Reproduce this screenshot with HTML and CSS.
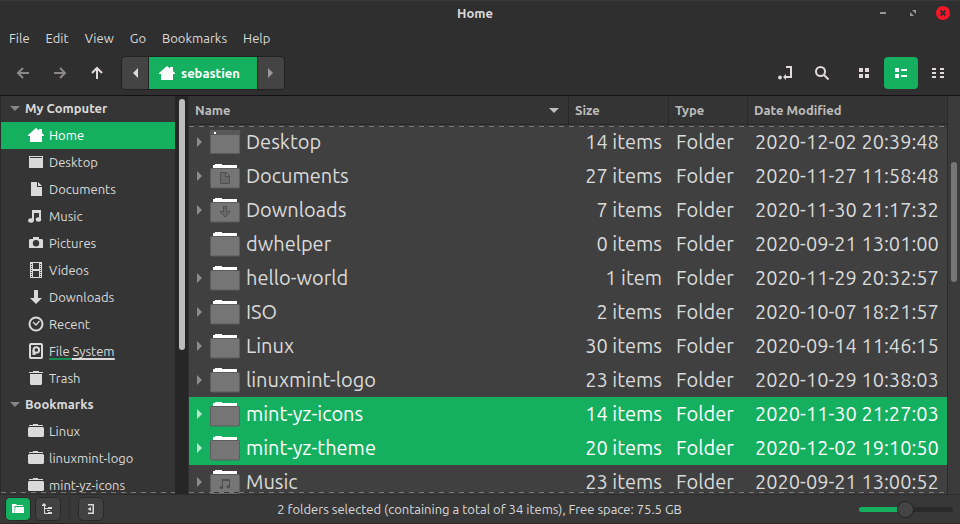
FILE: index.html
```html
<!DOCTYPE html>
<html lang="en">
<head>
<meta charset="utf-8">
<title>Home</title>
<link rel="stylesheet" href="styles.css">
</head>
<body>
<svg class="defs" aria-hidden="true">
  <symbol id="home" viewBox="0 0 16 16"><path d="M8 1 0 8v1h2v6h12V9h2V8l-2-1.800V2h-3v1.600z"/></symbol>
  <symbol id="bookmark-folder" viewBox="0 0 16 16"><path d="M1 3V2h4V1h5v1h5v1zM0 5l1-1h14l1 1v8l-1 1H1l-1-1z"/></symbol>
  <symbol id="caret-right" viewBox="0 0 5 10"><path d="M0 0v10l5-5z"/></symbol>
  <symbol id="caret-down" viewBox="0 0 10 5"><path d="M0 0h10L5 5z"/></symbol>
  <symbol id="folder" viewBox="0 0 30 26"><path fill="#fff" d="M3 5V2h2V1h7v1h15v3z"/><rect x="0.500" y="5.500" width="29" height="19.500" rx="1" fill="#757575" stroke="#5c5c5c"/></symbol>
  <symbol id="folder-desktop" viewBox="0 0 30 26"><rect x="0.500" y="1.500" width="29" height="23" fill="#757575" stroke="#5c5c5c"/><path fill="#585858" d="M0 1h30v5H0z"/><path fill="#fff" d="M4 3h2v2H4z"/></symbol>
</svg>

<header class="titlebar">
  <h1 class="title">Home</h1>
  <button class="window-button" aria-label="Minimize"><svg width="14" height="14" viewBox="0 0 14 14"><path fill="#979797" d="M4 6h6v2H4z"/></svg></button>
  <button class="window-button" aria-label="Maximize"><svg width="14" height="14" viewBox="0 0 14 14"><path fill="#979797" d="M6 4h4v4zM4 6v4h4z"/></svg></button>
  <button class="window-button" aria-label="Close"><svg width="14" height="14" viewBox="0 0 14 14"><circle cx="7" cy="7" r="7" fill="#ff1528"/><path stroke="#2f2f2f" stroke-width="2" d="m4.500 4.500 5 5m0-5-5 5"/></svg></button>
</header>

<nav class="menubar" aria-label="Menu">
  <button class="menu">File</button>
  <button class="menu">Edit</button>
  <button class="menu">View</button>
  <button class="menu">Go</button>
  <button class="menu">Bookmarks</button>
  <button class="menu">Help</button>
</nav>

<div class="toolbar">
  <button class="tool dim" aria-label="Back"><svg class="line" width="14" height="14" viewBox="0 0 14 14"><path d="M13 7H2m5-5L2 7l5 5"/></svg></button>
  <button class="tool dim" aria-label="Forward"><svg class="line" width="14" height="14" viewBox="0 0 14 14"><path d="M1 7h11M7 2l5 5-5 5"/></svg></button>
  <button class="tool" aria-label="Up"><svg class="line" width="14" height="14" viewBox="0 0 14 14"><path d="M7 13V2M2 7l5-5 5 5"/></svg></button>
  <div class="pathbar">
    <button class="path-step" aria-label="Scroll left"><svg width="5" height="10" viewBox="0 0 5 10"><path d="M5 0v10L0 5z"/></svg></button>
    <button class="path-current"><svg width="16" height="16"><use href="#home"/></svg>sebastien</button>
    <button class="path-step dim" aria-label="Scroll right"><svg width="5" height="10"><use href="#caret-right"/></svg></button>
  </div>
  <div class="tools-end">
    <button class="tool" aria-label="Toggle location entry"><svg width="16" height="16" viewBox="0 0 16 16"><circle cx="3" cy="12.500" r="1.900"/><path d="M9 1h6v12H9v2l-3-3 3-3v2h4V3H9z"/></svg></button>
    <button class="tool" aria-label="Search"><svg class="line" width="16" height="16" viewBox="0 0 16 16"><circle cx="6.500" cy="6.500" r="4.500"/><path d="m10 10 4.500 4.500"/></svg></button>
    <div class="views">
      <button class="tool" aria-label="Icon view"><svg width="16" height="16" viewBox="0 0 16 16"><path d="M3 3h4v4H3zM9 3h4v4H9zM3 9h4v4H3zM9 9h4v4H9z"/></svg></button>
      <button class="tool active" aria-label="List view"><svg width="16" height="16" viewBox="0 0 16 16"><path d="M2 3h4v4H2zM8 4h6v2H8zM2 9h4v4H2zM8 10h6v2H8z"/></svg></button>
      <button class="tool" aria-label="Compact view"><svg width="16" height="16" viewBox="0 0 16 16"><path d="M2 3h4v2H2zM2 7h4v2H2zM2 11h4v2H2zM10 3h4v2h-4zM10 7h4v2h-4zM10 11h4v2h-4z"/></svg></button>
    </div>
  </div>
</div>

<div class="content">
  <nav class="sidebar" aria-label="Places">
    <h2 class="group"><svg width="10" height="5"><use href="#caret-down"/></svg>My Computer</h2>
    <a class="place selected" href="#home"><svg width="16" height="16"><use href="#home"/></svg>Home</a>
    <a class="place" href="#desktop"><svg width="16" height="16" viewBox="0 0 16 16"><path fill-rule="evenodd" d="M1 2h14v12H1zM2 3v1h12V3z"/></svg>Desktop</a>
    <a class="place" href="#documents"><svg width="16" height="16" viewBox="0 0 16 16"><path d="M3 1h6v5h5v9H3zM10 1l4 4h-4z"/></svg>Documents</a>
    <a class="place" href="#music"><svg width="16" height="16" viewBox="0 0 16 16"><path d="M4 2h9v9h-2V5H6v7H4z"/><ellipse cx="3" cy="12.500" rx="2.800" ry="2.200"/><ellipse cx="10.500" cy="11.500" rx="2.700" ry="2.200"/></svg>Music</a>
    <a class="place" href="#pictures"><svg width="16" height="16" viewBox="0 0 16 16"><path fill-rule="evenodd" d="M5 2h6v2h3l1 1v8H1V5l1-1h3zM8 5a3.200 3.200 0 1 0 0 6.400A3.200 3.200 0 0 0 8 5z"/></svg>Pictures</a>
    <a class="place" href="#videos"><svg width="16" height="16" viewBox="0 0 16 16"><path fill-rule="evenodd" d="M2 0h12v16H2zM5 1v6h6V1zM5 9v6h6V9zM3 2v1h1V2zM3 4v1h1V4zM3 6v1h1V6zM3 8v1h1V8zM3 10v1h1v-1zM3 12v1h1v-1zM3 14v1h1v-1zM12 2v1h1V2zM12 4v1h1V4zM12 6v1h1V6zM12 8v1h1V8zM12 10v1h1v-1zM12 12v1h1v-1zM12 14v1h1v-1z"/></svg>Videos</a>
    <a class="place" href="#downloads"><svg width="16" height="16" viewBox="0 0 16 16"><path d="M6 1h4v8h4l-6 6-6-6h4z"/></svg>Downloads</a>
    <a class="place" href="#recent"><svg class="line" width="16" height="16" viewBox="0 0 16 16"><circle cx="8" cy="8" r="6.500"/><path stroke-width="1.300" d="m5 6 3 3 3.500-4"/></svg>Recent</a>
    <a class="place" href="#filesystem"><svg class="line" width="16" height="16" viewBox="0 0 16 16"><rect x="2" y="1" width="12" height="14" rx="1"/><circle cx="8.300" cy="7" r="2.800"/><path d="M5.500 7v5M5.500 11h2"/></svg><span class="usage">File System</span></a>
    <a class="place" href="#trash"><svg width="16" height="16" viewBox="0 0 16 16"><path d="M1 3V2h4V1h6v1h4v1zM2 4h12v10l-1 1H3l-1-1z"/></svg>Trash</a>
    <h2 class="group"><svg width="10" height="5"><use href="#caret-down"/></svg>Bookmarks</h2>
    <a class="place" href="#linux"><svg width="16" height="16"><use href="#bookmark-folder"/></svg>Linux</a>
    <a class="place" href="#linuxmint-logo"><svg width="16" height="16"><use href="#bookmark-folder"/></svg>linuxmint-logo</a>
    <a class="place" href="#mint-yz-icons"><svg width="16" height="16"><use href="#bookmark-folder"/></svg>mint-yz-icons</a>
  </nav>
  <div class="side-scroll"><div class="side-thumb"></div></div>

  <main class="files">
    <table>
      <colgroup><col><col class="col-size"><col class="col-type"><col class="col-date"></colgroup>
      <thead>
        <tr><th><span class="sort">Name<svg width="10" height="5"><use href="#caret-down"/></svg></span></th><th>Size</th><th>Type</th><th>Date Modified</th></tr>
      </thead>
      <tbody>
        <tr><td><span class="name"><svg class="expander"><use href="#caret-right"/></svg><svg class="folder"><use href="#folder-desktop"/></svg>Desktop</span></td><td>14 items</td><td>Folder</td><td>2020-12-02 20:39:48</td></tr>
        <tr><td><span class="name"><svg class="expander"><use href="#caret-right"/></svg><svg class="folder"><use href="#folder"/><path fill="#686868" stroke="#4f4f4f" d="M10.500 9.500h6l3 3v8h-9zM15.500 9.500v4h4"/></svg>Documents</span></td><td>27 items</td><td>Folder</td><td>2020-11-27 11:58:48</td></tr>
        <tr><td><span class="name"><svg class="expander"><use href="#caret-right"/></svg><svg class="folder"><use href="#folder"/><path fill="#686868" stroke="#4f4f4f" d="M13.500 9.500h3v5h3.500l-5 5.500-5-5.500h3.500z"/></svg>Downloads</span></td><td>7 items</td><td>Folder</td><td>2020-11-30 21:17:32</td></tr>
        <tr><td><span class="name"><svg class="expander"></svg><svg class="folder"><use href="#folder"/></svg>dwhelper</span></td><td>0 items</td><td>Folder</td><td>2020-09-21 13:01:00</td></tr>
        <tr><td><span class="name"><svg class="expander"><use href="#caret-right"/></svg><svg class="folder"><use href="#folder"/></svg>hello-world</span></td><td>1 item</td><td>Folder</td><td>2020-11-29 20:32:57</td></tr>
        <tr><td><span class="name"><svg class="expander"><use href="#caret-right"/></svg><svg class="folder"><use href="#folder"/></svg>ISO</span></td><td>2 items</td><td>Folder</td><td>2020-10-07 18:21:57</td></tr>
        <tr><td><span class="name"><svg class="expander"><use href="#caret-right"/></svg><svg class="folder"><use href="#folder"/></svg>Linux</span></td><td>30 items</td><td>Folder</td><td>2020-09-14 11:46:15</td></tr>
        <tr><td><span class="name"><svg class="expander"><use href="#caret-right"/></svg><svg class="folder"><use href="#folder"/></svg>linuxmint-logo</span></td><td>23 items</td><td>Folder</td><td>2020-10-29 10:38:03</td></tr>
        <tr class="selected"><td><span class="name"><svg class="expander"><use href="#caret-right"/></svg><svg class="folder"><use href="#folder"/></svg>mint-yz-icons</span></td><td>14 items</td><td>Folder</td><td>2020-11-30 21:27:03</td></tr>
        <tr class="selected"><td><span class="name"><svg class="expander"><use href="#caret-right"/></svg><svg class="folder"><use href="#folder"/></svg>mint-yz-theme</span></td><td>20 items</td><td>Folder</td><td>2020-12-02 19:10:50</td></tr>
        <tr><td><span class="name"><svg class="expander"><use href="#caret-right"/></svg><svg class="folder"><use href="#folder"/><path fill="#4f4f4f" d="M12 10h8v8h-1v-6h-6v7h-1z"/><circle cx="11.500" cy="18.500" r="1.700" fill="#4f4f4f"/><circle cx="18.200" cy="17.800" r="1.700" fill="#4f4f4f"/></svg>Music</span></td><td>23 items</td><td>Folder</td><td>2020-09-21 13:00:52</td></tr>
      </tbody>
    </table>
  </main>
  <div class="file-scroll"><div class="file-thumb"></div></div>
</div>

<footer class="statusbar">
  <button class="panel-button active" aria-label="Show places"><svg width="12" height="12" viewBox="0 0 12 12"><path d="M0 1h4l1 1h6v1H2.500v7H0z"/><path d="M3.500 4H12v6H2.500z"/></svg></button>
  <button class="panel-button" aria-label="Show tree"><svg width="12" height="12" viewBox="0 0 12 12"><path d="M0 2 2 0l2 2v1H3v2h3v1H3v4h3v1H2V3H0z"/><path d="M6 4h4v2H6zM6 9h4v2H6zM5 7h3v1H5z"/></svg></button>
  <span class="separator"></span>
  <button class="panel-button" aria-label="Hide sidebar"><svg width="12" height="12" viewBox="0 0 12 12"><path d="M3 1h6v10H3V9.500h4.500v-7H3zM6 4v4L2.500 6z"/></svg></button>
  <p class="status">2 folders selected (containing a total of 34 items), Free space: 75.5 GB</p>
  <input class="zoom" type="range" min="0" max="100" value="49" aria-label="Zoom level">
</footer>
</body>
</html>
```
FILE: styles.css
```css
:root {
  --green: #14b060;
  --bar: #2f2f2f;
  --text: #dadada;
}

* { box-sizing: border-box; }

body {
  margin: 0;
  height: 100vh;
  display: flex;
  flex-direction: column;
  overflow: hidden;
  background: var(--bar);
  color: var(--text);
  font: 13px/18px Ubuntu, "Noto Sans", sans-serif;
}

h1, h2, p { margin: 0; font-size: inherit; }

button {
  display: flex;
  align-items: center;
  justify-content: center;
  padding: 0;
  border: 0;
  background: none;
  color: inherit;
  font: inherit;
}

a { color: inherit; text-decoration: none; }

svg { flex: none; fill: currentColor; }

.defs { position: absolute; width: 0; height: 0; }

.line { fill: none; stroke: currentColor; stroke-width: 2; }

.titlebar {
  display: flex;
  align-items: center;
  height: 27px;
  padding: 0 2px 2px 82px;
  border-top: 1px solid #3a3a3a;
}

.title { flex: 1; text-align: center; font-weight: 700; }

.window-button { width: 30px; height: 24px; }

.menubar { display: flex; height: 23px; padding: 0 0 2px 1px; }

.menu { padding: 0 8px; }

.toolbar {
  display: flex;
  align-items: center;
  gap: 3px;
  height: 46px;
  padding: 0 5px 0 6px;
  border-bottom: 1px solid #121212;
}

.tool { width: 34px; height: 32px; border-radius: 4px; color: #e0dada; }

.tool.dim { color: #8c8888; }

.tool.active { color: #fff; }

.active { background: var(--green); }

.pathbar {
  display: flex;
  margin-left: 4px;
  border: 1px solid #222;
  border-radius: 5px;
  overflow: hidden;
}

.path-step { width: 26px; background: #444; }

.path-step.dim { color: #999; }

.path-current {
  gap: 6px;
  height: 32px;
  padding: 0 17px 0 10px;
  border: solid #222;
  border-width: 0 1px;
  background: var(--green);
  color: #fff;
  font-weight: 700;
}

.tools-end { display: flex; gap: 3px; margin-left: auto; }

.views { display: flex; gap: 3px; margin-left: 5px; }

.content { flex: 1; display: flex; min-height: 0; }

.sidebar, .files { position: relative; overflow: hidden; }

.sidebar {
  flex: 0 0 175px;
  border-left: 1px solid #2b2b2b;
  background: #353535;
}

/* Dashed edges mark where more content can be scrolled to. */
.sidebar::after, .files::before, .files::after {
  content: "";
  position: absolute;
  left: 0;
  right: 0;
  bottom: 1px;
  height: 1px;
  background: repeating-linear-gradient(90deg, #777 0 5px, #383838 5px 10px);
}

.files::before { top: 30px; bottom: auto; }

.group, .place {
  display: flex;
  align-items: center;
  gap: 5px;
  height: 27px;
  padding-bottom: 2px;
}

.group { height: 26px; padding-left: 9px; font-weight: 700; }

.group svg { color: #858585; }

.place { padding-left: 27px; }

.selected { background: var(--green); color: #fff; }

.usage {
  background: linear-gradient(90deg, #158f52 35%, #dadada 35%) bottom / 100% 2px no-repeat;
}

.side-scroll { flex: 0 0 14px; padding: 3px 3px 3px 4px; border-right: 1px solid #303030; background: #262626; }

.side-thumb { width: 6px; height: 64%; border-radius: 3px; background: #bdbdbd; }

.files { flex: 1; background: #404040; }

table { width: 100%; table-layout: fixed; border-collapse: separate; border-spacing: 0; }

.col-size { width: 100px; }
.col-type { width: 79px; }
.col-date { width: 199px; }

th {
  height: 29px;
  padding: 0 9px 0 6px;
  border-right: 1px solid #282828;
  border-bottom: 1px solid #282828;
  background: #343434;
  color: #bdbdbd;
  text-align: left;
  font-weight: 700;
}

th:last-child { border-right: 0; }

.sort { display: flex; align-items: center; justify-content: space-between; }

td {
  height: 34px;
  padding: 0 7px;
  font-size: 20px;
  line-height: 24px;
  white-space: nowrap;
}

td:first-child { padding-left: 8px; }

td:nth-child(2) { text-align: right; }

.name { display: flex; align-items: center; }

.expander { width: 5px; height: 10px; margin-right: 8px; color: #8c8c8c; }

.selected .expander { color: #b9e8cf; }

.folder { width: 30px; height: 26px; margin-right: 6px; }

.file-scroll { flex: 0 0 13px; padding: 66px 3px 0; border-left: 1px solid #2b2b2b; background: #3b3b3b; }

.file-thumb { height: 36%; border-radius: 3px; background: #777; }

.statusbar {
  display: flex;
  align-items: center;
  gap: 4px;
  height: 30px;
  padding: 0 7px 0 5px;
  border-top: 1px solid #2d2d2d;
  border-bottom: 1px solid #282828;
  background: #383838;
}

.panel-button {
  width: 26px;
  height: 24px;
  border: 1px solid #2a2a2a;
  border-radius: 5px;
  background: #424242;
}

.panel-button.active { background: var(--green); color: #fff; }

.separator { width: 1px; height: 24px; margin: 0 4px; background: #303030; }

.status { flex: 1; padding-right: 4px; text-align: center; }

.zoom { width: 94px; height: 18px; margin: 0; appearance: none; background: none; }

.zoom::-webkit-slider-runnable-track {
  height: 5px;
  border-radius: 3px;
  background: linear-gradient(90deg, var(--green) 49%, #2a2a2a 49%);
}

.zoom::-webkit-slider-thumb {
  appearance: none;
  width: 17px;
  height: 17px;
  margin-top: -6px;
  border: 1px solid #222;
  border-radius: 50%;
  background: #444;
}
```
